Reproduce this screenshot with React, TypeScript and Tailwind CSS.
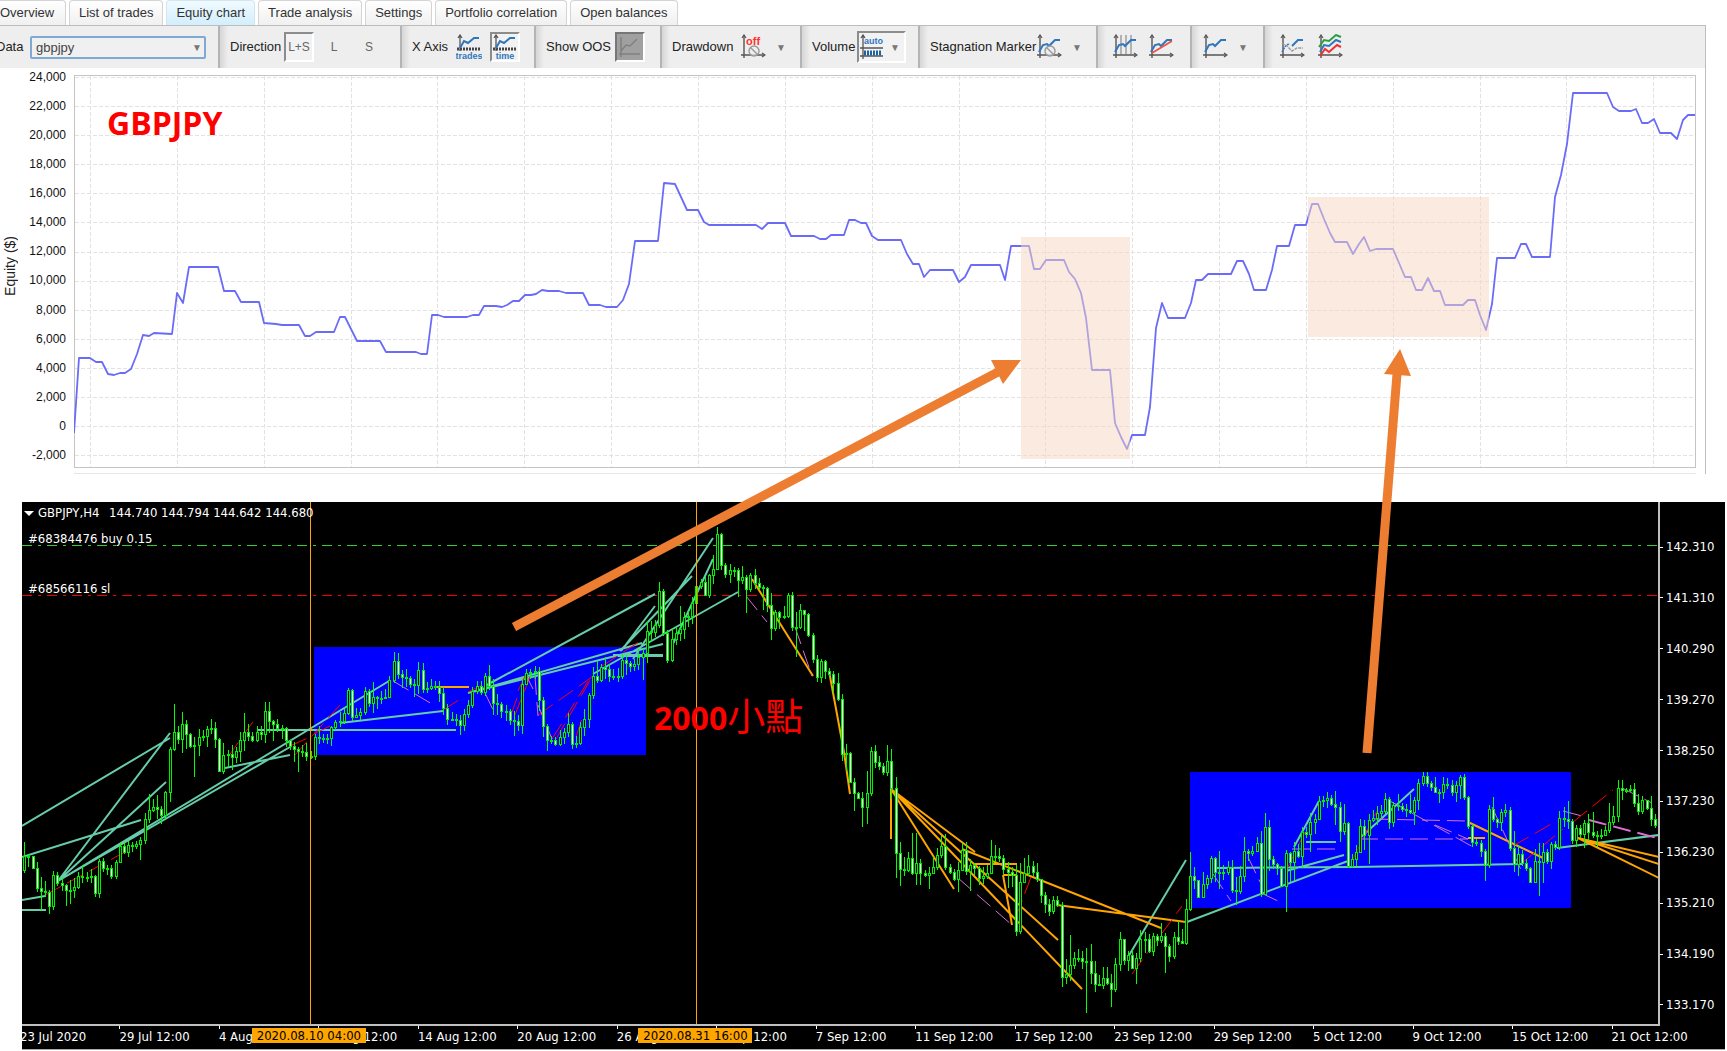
import React from "react";

const tabs = [
  "List of trades",
  "Equity chart",
  "Trade analysis",
  "Settings",
  "Portfolio correlation",
  "Open balances",
];

const equityLabels = [
  "24,000", "22,000", "20,000", "18,000", "16,000", "14,000", "12,000",
  "10,000", "8,000", "6,000", "4,000", "2,000", "0", "-2,000",
];

const priceLabels = [
  "142.310", "141.310", "140.290", "139.270", "138.250",
  "137.230", "136.230", "135.210", "134.190", "133.170",
];

const timeLabels = [
  "23 Jul 2020", "29 Jul 12:00", "4 Aug 12:00", "10 Aug 12:00", "14 Aug 12:00",
  "20 Aug 12:00", "26 Aug 12:00", "1 Sep 12:00", "7 Sep 12:00", "11 Sep 12:00",
  "17 Sep 12:00", "23 Sep 12:00", "29 Sep 12:00", "5 Oct 12:00", "9 Oct 12:00",
  "15 Oct 12:00", "21 Oct 12:00",
];

const equityPoints =
  "74,433 79,358 90,358 96,362 102,362 108,374 114,375 120,373 125,373 131,369 137,354 143,335 149,336 154,333 172,334 " +
  "177,293 183,303 189,267 218,267 224,291 235,291 241,302 259,302 264,323 276,324 282,325 299,325 305,336 310,336 " +
  "316,332 334,332 340,317 345,317 357,341 380,341 386,352 416,352 421,354 427,354 432,315 438,315 444,317 467,317 " +
  "473,315 479,315 484,306 496,306 502,307 507,305 513,301 519,301 525,295 531,295 536,294 542,290 548,291 559,291 " +
  "566,293 583,293 589,305 600,305 606,307 617,307 623,300 629,284 635,241 658,241 664,183 675,184 687,210 698,210 " +
  "704,222 709,225 756,225 762,229 768,223 785,223 791,236 814,236 820,239 826,239 831,235 844,235 849,220 855,220 " +
  "861,223 866,223 872,236 878,240 901,240 907,254 913,264 919,264 924,277 930,270 953,270 959,282 965,277 971,265 " +
  "1000,265 1005,280 1011,246 1029,246 1034,269 1040,269 1046,260 1064,260 1069,272 1075,279 1081,293 1086,318 " +
  "1092,370 1110,370 1115,423 1121,437 1127,449 1132,435 1145,435 1150,407 1156,328 1162,303 1168,318 1185,318 " +
  "1191,303 1196,280 1202,280 1208,274 1231,274 1237,261 1243,261 1249,274 1254,290 1266,290 1272,270 1277,246 " +
  "1289,246 1295,225 1306,225 1312,204 1318,204 1324,219 1330,233 1335,242 1347,242 1353,254 1359,244 1364,237 " +
  "1370,251 1376,249 1393,249 1399,263 1405,277 1411,277 1416,290 1422,290 1428,278 1434,291 1440,291 1445,305 " +
  "1463,305 1468,300 1475,300 1480,315 1486,330 1492,304 1497,258 1515,258 1521,244 1526,244 1532,257 1550,257 " +
  "1555,197 1561,175 1567,144 1573,93 1607,93 1613,107 1619,111 1631,111 1636,109 1642,123 1648,123 1654,119 " +
  "1660,133 1671,133 1677,139 1683,120 1688,115 1695,115";

// close, high, low of each H4 bar, as chart ordinates
const bars = `857,843,874 857,855,868 869,857,870 889,863,893 892,878,911 893,882,898 907,891,915 876,872,911 884,873,887 886,879,892
891,885,907 891,881,905 888,879,899 877,873,890 878,866,884 878,873,883 877,870,884 894,876,898 862,860,899 869,859,873
869,866,876 877,866,880 863,861,880 847,843,864 853,843,855 846,842,858 847,843,853 845,842,850 841,838,861 820,814,845
811,795,824 808,800,813 810,796,820 816,807,825 793,792,820 750,748,803 733,705,752 740,727,745 725,713,754 735,721,750
747,734,749 746,738,778 738,730,757 737,731,742 730,727,748 729,720,735 740,723,749 772,739,773 756,744,775 755,751,768
758,746,771 752,748,764 741,733,763 733,714,752 737,725,742 741,733,743 733,727,743 735,727,741 712,703,744 722,703,734
725,721,742 729,720,733 729,726,740 741,728,748 747,741,751 750,743,763 752,748,773 753,746,758 757,744,762 757,752,760
738,735,761 739,727,745 739,735,744 739,735,745 728,727,747 723,721,731 722,713,728 714,710,725 691,689,716 718,690,722
716,709,717 713,709,721 692,688,716 704,690,708 698,683,714 699,697,710 699,692,705 698,690,700 681,677,699 662,653,684
675,654,680 678,671,689 679,670,688 685,677,689 686,680,698 671,663,695 690,664,694 689,683,694 687,680,691 688,682,691
694,682,703 709,688,716 720,705,726 720,713,722 721,715,727 726,716,736 715,710,732 706,701,719 692,688,709 687,682,695
693,682,696 677,674,697 687,666,691 704,680,716 705,695,716 712,703,719 712,706,722 721,710,726 722,712,737 726,716,732
685,680,735 674,670,686 673,670,680 672,667,680 701,668,712 727,698,738 741,725,752 741,737,745 745,738,747 738,731,747
733,729,745 725,714,738 745,723,750 744,737,749 728,723,746 720,710,737 696,694,729 677,668,700 681,662,684 668,665,683
670,658,680 677,665,683 677,670,681 677,669,683 661,655,680 664,656,676 667,662,673 665,660,672 658,650,671 654,650,681
632,622,664 633,622,643 626,621,638 592,583,629 634,590,637 661,631,664 640,629,663 634,628,646 630,607,642 618,613,640
617,612,628 604,598,625 587,585,605 583,580,590 596,578,597 576,575,599 570,556,585 535,528,571 566,534,571 575,564,579
571,565,584 571,568,578 581,569,598 578,567,585 590,576,614 576,574,593 584,570,590 588,579,591 589,586,611 606,588,613
629,594,641 613,611,632 618,612,630 617,607,620 596,594,619 628,593,632 628,613,658 611,605,630 615,613,632 636,614,638
660,634,664 678,656,683 662,660,684 672,661,680 675,669,678 684,672,694 700,674,702 755,695,762 754,745,772 783,753,784
794,779,812 799,793,800 808,793,828 794,772,825 752,748,797 763,746,769 767,757,771 773,764,776 762,746,777 789,750,800
854,778,879 870,843,887 871,858,877 859,853,873 874,834,876 864,834,886 874,860,886 876,871,878 874,868,890 868,858,874
856,849,871 847,837,859 868,835,871 873,865,875 880,870,882 871,863,893 851,844,869 872,843,876 866,860,892 869,864,876
879,867,886 877,868,885 874,866,880 857,841,875 857,846,863 859,849,863 870,856,876 873,863,889 876,868,888 932,866,937
883,864,935 874,859,884 867,856,877 873,862,878 880,864,883 896,880,904 905,893,914 912,900,917 901,897,915 906,897,908
978,903,988 975,960,985 966,936,982 959,953,970 959,950,963 962,952,970 962,949,1014 974,945,985 985,962,993 986,976,987
979,968,990 984,968,986 990,975,1008 965,959,993 940,933,972 961,940,966 956,952,972 969,950,970 959,954,985 940,931,963
940,933,954 952,935,954 937,934,957 941,935,947 937,924,944 947,934,974 957,945,963 938,933,960 942,922,946 944,930,945
910,900,946 877,853,912 881,868,890 898,881,899 885,873,898 879,876,890 859,857,884 873,858,883 873,852,890 873,866,881
868,862,876 891,861,894 892,878,906 877,867,895 852,838,883 854,850,862 852,847,857 844,838,853 895,832,898 828,814,896
860,821,872 865,857,870 869,864,876 887,867,888 854,851,913 863,853,883 852,843,882 857,845,859 833,828,869 835,828,839
823,814,853 820,815,835 802,797,821 801,797,808 799,793,809 805,796,807 808,792,826 832,803,843 824,805,836 867,823,869
860,855,869 853,846,868 827,820,854 836,821,851 821,815,865 819,811,823 814,807,826 812,806,820 800,794,815 823,798,830
806,803,828 807,795,812 810,804,813 811,805,818 813,795,815 801,798,826 784,780,811 777,773,787 784,773,788 788,782,792
793,778,794 793,790,804 785,778,800 786,779,790 793,781,797 786,782,803 778,776,800 798,775,801 827,797,830 843,825,848
844,840,847 852,841,858 866,850,882 810,806,869 820,798,823 823,819,829 813,810,832 811,805,818 849,808,852 865,832,873
855,846,877 864,851,867 869,860,872 883,868,884 862,850,883 863,844,897 853,844,884 862,850,865 845,843,870 848,842,851
819,812,851 820,808,828 822,802,830 841,820,845 829,826,848 835,826,839 824,821,849 833,815,842 836,813,839 836,832,848
836,830,840 831,827,837 823,804,834 817,807,826 789,781,823 791,781,801 791,789,794 790,786,793 804,784,808 812,795,816
801,797,815 809,801,811 820,797,827 826,815,829`
  .split(/\s+/)
  .map((bar) => bar.split(",").map(Number));

const winners =
  "M22 827L170 739 M58 882L170 734 M58 882L166 783 M22 858L141 821 M58 882L389 682 M58 882L290 748 M22 901L45 897 " +
  "M22 911H46 M225 769L290 756 M257 731H456 M340 724L443 712 M485 687L655 595 M468 694L642 644 M468 694L663 645 " +
  "M613 656H663 M618 657H663 M621 652L655 607 M620 652L692 577 M633 660L713 539 M672 647L713 560 M593 675L738 593 " +
  "M1128 958L1186 861 M1187 923L1348 862 M1217 869L1355 868L1522 865 M1286 872L1344 856 M1294 848L1319 802 " +
  "M1306 843H1336 M1360 839L1414 790 M1557 849L1659 836";

const losers =
  "M436 688H469 M752 580L813 677 M829 672L844 753L850 795 M891 790V840 M891 790L954 890 M891 790L1082 990 " +
  "M891 790L1058 941 M891 790L975 853 M962 850L1161 929 M974 865H1017 M1003 876H1016 M1003 876L1012 926 " +
  "M1057 906L1186 923 M1468 823L1543 859 M1468 839H1485 M1578 839L1659 858 M1578 839L1659 865 M1578 839L1659 879";

const closedBuys =
  "M45 896L125 853 M228 758L257 717 M290 747L310 738 M295 756L340 706 M314 735L334 725 M443 711L462 699 M468 693L482 686 " +
  "M512 713L517 699 M515 716L530 678 M518 692L527 673 M538 716L592 678 M552 740L592 676 M556 740L592 678 M576 738L585 711 " +
  "M602 667L642 641 M1031 878L1017 915 M1132 975L1182 907 M1513 847L1553 824 M1522 864L1563 830 M1573 823L1613 791 " +
  "M1287 870L1305 833 M1352 862L1377 812";

const closedSells =
  "M393 682L432 705 M485 694L496 717 M528 680L533 690 M535 678L538 717 M538 706L552 740 M746 597L767 623 M795 628L812 677 " +
  "M958 879L1012 926 M1213 875L1231 902 M1248 858L1260 883 M1261 894L1278 902 M1292 850H1337 M1360 840H1468 " +
  "M1372 820L1467 822 M1390 802L1475 849 M1435 826L1468 840 M1492 808L1522 873 M1563 812L1582 817 M1622 789L1652 804";

const Candle = ({ index }: { index: number }) => {
  const [close, high, low] = bars[index];
  const open = index ? bars[index - 1][0] : 871;
  const x = Math.round(24.3 + index * 4.149);
  const top = Math.min(open, close);
  const height = Math.max(Math.abs(close - open), 1);
  return (
    <g>
      <rect x={x} y={high} width="1" height={low - high} fill="#00ff00" />
      <rect
        x={x - 0.5}
        y={top + 0.5}
        width="2"
        height={height}
        fill={close > open ? "#ffffff" : "#000000"}
        stroke="#00f000"
      />
    </g>
  );
};

const Axes = () => (
  <g stroke="#555" strokeWidth="1.4" fill="none">
    <path d="M4 1V24M1 21H24" />
    <path d="M2 4L4 1L6 4M22 19L25 21L22 23" strokeWidth="1.2" />
  </g>
);

const Icon = ({ children, label }: { children: React.ReactNode; label?: string }) => (
  <svg width="26" height="26" viewBox="0 0 26 26" fill="none" role="img" aria-label={label}>
    {children}
  </svg>
);

const BLUE_LINE = "M3 18L7 11L11 10L13 12L19 6L24 6";

const AxisIcon = ({ word }: { word: string }) => (
  <Icon>
    <path d="M4 1V17M2 4L4 1L6 4" stroke="#555" strokeWidth="1.3" />
    <path d="M1 15H25" stroke="#444" strokeWidth="3" strokeDasharray="2 1" />
    <path d="M4 14L8 7L12 9L18 4L23 4" stroke="#2f76bd" strokeWidth="2" />
    <text x="13" y="25" textAnchor="middle" fontSize="9" fontWeight="700" fill="#2f76bd">
      {word}
    </text>
  </Icon>
);

const Forbidden = () => (
  <g stroke="#999" strokeWidth="1.4">
    <circle cx="14" cy="17" r="5" fill="#eee" fillOpacity="0.7" />
    <path d="M10.500 13.500L17.500 20.500" />
  </g>
);

const Group = ({ className, children }: { className: string; children: React.ReactNode }) => (
  <div
    className={`flex h-full shrink-0 items-center border-l-2 border-[#b4b4b4] bg-[linear-gradient(to_right,#d6d6d6,#eeeeee_8px)] pl-2.5 ${className}`}
  >
    {children}
  </div>
);

const pressed = "border-2 border-t-[#8c8c8c] border-l-[#8c8c8c] border-r-white border-b-white bg-[#f2f2f2]";

const Arrow = () => <span className="text-[10px] text-[#777]">▼</span>;

const Toolbar = () => (
  <div className="flex h-[42px] items-center overflow-hidden bg-[#eeeeee] text-[13px] whitespace-nowrap text-[#222]">
    <div className="flex w-[218px] shrink-0 items-center">
      <label htmlFor="data" className="-ml-1 w-[34px]">Data</label>
      <div className="relative w-[176px]">
        <select
          id="data"
          className="block h-[23px] w-full appearance-none rounded-xs border-2 border-[#7fa9d2] bg-[#f0f0f0] pl-1 text-[13px] text-[#444]"
        >
          <option>gbpjpy</option>
        </select>
        <span className="pointer-events-none absolute top-1 right-1 text-[10px] text-[#777]">▼</span>
      </div>
    </div>
    <Group className="w-[182px]">
      <span className="w-[54px]">Direction</span>
      <button className={`h-[30px] w-[30px] text-xs text-[#666] ${pressed}`}>L+S</button>
      <button className="ml-0.5 w-[36px] text-xs text-[#666]">L</button>
      <button className="w-[34px] text-xs text-[#666]">S</button>
    </Group>
    <Group className="w-[134px]">
      <span className="w-[44px]">X Axis</span>
      <button aria-label="By trades"><AxisIcon word="trades" /></button>
      <button aria-label="By time" className={`ml-2 flex h-[30px] w-[30px] items-center justify-center ${pressed}`}>
        <AxisIcon word="time" />
      </button>
    </Group>
    <Group className="w-[126px]">
      <span className="w-[69px]">Show OOS</span>
      <button aria-label="Show OOS" className="h-[30px] w-[30px] border-2 border-t-[#777] border-r-white border-b-white border-l-[#777] bg-[#a0a0a0]">
        <Icon>
          <path d="M4 3V23M2 20H23M4 17L9 11L13 12L20 5" stroke="#808080" strokeWidth="1.500" />
        </Icon>
      </button>
    </Group>
    <Group className="w-[140px]">
      <span className="w-[68px]">Drawdown</span>
      <button aria-label="Drawdown" className="flex items-center gap-2.5">
        <Icon>
          <Axes />
          <Forbidden />
          <text x="6" y="11" fontSize="11" fontWeight="700" fill="#ff3030">off</text>
        </Icon>
        <Arrow />
      </button>
    </Group>
    <Group className="w-[118px]">
      <span className="w-[45px]">Volume</span>
      <button aria-label="Volume" className={`flex h-8 w-[49px] items-center justify-between pr-1 ${pressed}`}>
        <Icon>
          <path d="M4 1V25M1 14H24M1 22H24M2 4L4 1L6 4" stroke="#555" strokeWidth="1.300" />
          <path d="M5 19H23" stroke="#2060a0" strokeWidth="5" strokeDasharray="2 1" />
          <text x="5" y="10" fontSize="9" fontWeight="700" fill="#2f76bd">auto</text>
        </Icon>
        <Arrow />
      </button>
    </Group>
    <Group className="w-[178px]">
      <span className="w-[106px]">Stagnation Marker</span>
      <button aria-label="Stagnation marker" className="flex items-center gap-2.5">
        <Icon>
          <Axes />
          <path d={BLUE_LINE} stroke="#2f76bd" strokeWidth="2" />
          <Forbidden />
        </Icon>
        <Arrow />
      </button>
    </Group>
    <Group className="w-[94px] gap-2.5 pl-3.5">
      <button aria-label="Grid">
        <Icon>
          <Axes />
          <path d="M9 1V21M14 1V21M19 1V21" stroke="#777" />
          <path d={BLUE_LINE} stroke="#2f76bd" strokeWidth="2" />
        </Icon>
      </button>
      <button aria-label="Trend line">
        <Icon>
          <Axes />
          <path d={BLUE_LINE} stroke="#2f76bd" strokeWidth="2" />
          <path d="M4 19L24 7" stroke="#f05040" strokeWidth="1.800" />
        </Icon>
      </button>
    </Group>
    <Group className="w-[73px]">
      <button aria-label="Line style" className="flex items-center gap-2.5">
        <Icon>
          <Axes />
          <path d={BLUE_LINE} stroke="#2f76bd" strokeWidth="2" />
        </Icon>
        <Arrow />
      </button>
    </Group>
    <Group className="flex-1 gap-3 pl-3.5">
      <button aria-label="Compare">
        <Icon>
          <Axes />
          <path d="M3 18L7 11L11 10" stroke="#2f76bd" strokeWidth="1.500" strokeDasharray="2 1" />
          <path d="M3 9L8 12L13 17L18 14L24 14" stroke="#999" strokeWidth="1.400" strokeDasharray="3 1" />
          <path d="M13 12L19 6L24 6" stroke="#2f76bd" strokeWidth="2" />
        </Icon>
      </button>
      <button aria-label="All curves">
        <Icon>
          <Axes />
          <path d="M2 13L7 6L12 7L19 1L24 3" stroke="#2ca03c" strokeWidth="2" />
          <path d="M3 18L7 11L12 12L19 6L24 8" stroke="#2f76bd" strokeWidth="2" />
          <path d="M3 22L8 15L12 18L20 11L24 13" stroke="#f03030" strokeWidth="2" />
        </Icon>
      </button>
    </Group>
  </div>
);

const EquityChart = () => (
  <div className="flex">
    <div className="flex w-[74px] shrink-0 items-stretch pt-[3px] pb-[13px]">
      <div className="flex w-5 items-center justify-center">
        <span className="rotate-180 text-sm leading-5 whitespace-nowrap text-[#222] [writing-mode:vertical-rl]">Equity ($)</span>
      </div>
      <div className="flex flex-1 flex-col justify-between pr-2 text-right text-xs leading-3 text-[#111]">
        {equityLabels.map((label) => (
          <span key={label}>{label}</span>
        ))}
      </div>
    </div>
    <div className="min-w-0 flex-1 pt-[7px] pr-[9px]">
      <div className="border-b border-[#e6e6e6] pb-[5px]">
        <svg viewBox="74 75 1622 393" className="block w-full">
          <g stroke="#e2e2e2" strokeDasharray="4 2">
            {equityLabels.map((label, i) => (
              <path key={label} d={`M75 ${Math.round(76.8 + i * 29.13) + 0.5}H1695`} />
            ))}
            {Array.from({ length: 19 }, (_, i) => (
              <path key={i} d={`M${Math.round(90 + i * 86.85) + 0.5} 76V467`} />
            ))}
          </g>
          <rect x="74.500" y="75.500" width="1621" height="392" fill="none" stroke="#c4c4c4" />
          <polyline points={equityPoints} fill="none" stroke="#6a6cf8" strokeWidth="1.800" strokeLinejoin="round" />
        </svg>
      </div>
    </div>
  </div>
);

const PriceChart = () => (
  <section className="mt-7 mr-0.5 ml-[22px] border-b border-[#aaa] bg-black font-['DejaVu_Sans_Condensed','Noto_Sans',sans-serif] text-[13px] leading-4 text-white">
    <div className="flex">
      <div className="relative min-w-0 flex-1">
        <svg viewBox="22 503 1636 522" className="block w-full">
          <rect x="314" y="648" width="332" height="108" fill="#0000ff" />
          <rect x="1190" y="773" width="381" height="136" fill="#0000ff" />
          <path d="M22 546.500H1658" stroke="#32cd32" strokeDasharray="10 6 3 6" />
          <path d="M22 596.500H1658" stroke="#f00000" strokeDasharray="10 6 3 6" />
          <g fill="none">
            <path d={winners} stroke="#66cdaa" strokeWidth="2" />
            <path d={losers} stroke="#ffa500" strokeWidth="2" />
            <path d={closedBuys} stroke="#ff0000" strokeDasharray="18 7" />
            <path d={closedSells} stroke="#da70d6" strokeDasharray="18 7" />
            <path d="M1589 821L1657 839" stroke="#da70d6" strokeWidth="2" strokeDasharray="18 7" />
          </g>
          {bars.map((_, i) => (
            <Candle key={i} index={i} />
          ))}
          <path d="M310.500 503V1025M696.500 503V1025" stroke="#ffa500" />
        </svg>
        <div className="absolute top-[3px] left-0.5 whitespace-nowrap">
          <p className="flex items-center">
            <svg width="10" height="5" viewBox="0 0 10 5" fill="#fff"><path d="M0 0H10L5 5Z" /></svg>
            <span className="ml-1 w-[71px]">GBPJPY,H4</span>
            <span>144.740 144.794 144.642 144.680</span>
          </p>
          <p className="mt-2.5 ml-1">#68384476 buy 0.15</p>
          <p className="mt-[34px] ml-1">#68566116 sl</p>
        </div>
      </div>
      <div className="flex w-[67px] shrink-0 flex-col justify-between border-l-2 border-[#c0c0c0] pt-[37px] pb-[11px]">
        {priceLabels.map((label) => (
          <span key={label} className="flex items-center gap-[3px]">
            <i className="h-px w-[3px] bg-white" />
            {label}
          </span>
        ))}
      </div>
    </div>
    <div className="relative h-[25px] overflow-hidden">
      <div className="mr-[65px] h-0.5 bg-[#c0c0c0]" />
      <div className="mr-3.5 -ml-0.5 grid grid-cols-17 whitespace-nowrap">
        {timeLabels.map((label) => (
          <div key={label}>
            <i className="block h-[3px] w-px bg-white" />
            <span className="block leading-4">{label}</span>
          </div>
        ))}
      </div>
      <span className="absolute top-1 left-[13.5%] w-[114px] bg-[#ffa500] text-center leading-[15px] text-black">2020.08.10 04:00</span>
      <span className="absolute top-1 left-[36.2%] w-[114px] bg-[#ffa500] text-center leading-[15px] text-black">2020.08.31 16:00</span>
    </div>
  </section>
);

// highlights, arrows and captions drawn over both charts
const Annotations = () => (
  <svg viewBox="0 0 1727 1051" className="pointer-events-none absolute inset-0 w-full">
    <g fill="#f7d5bf" fillOpacity="0.5">
      <rect x="1021" y="237" width="109" height="222" />
      <rect x="1308" y="197" width="181" height="140" />
    </g>
    <g fill="#ed7d31" stroke="#ed7d31">
      <path d="M514 627L998 372" strokeWidth="9" />
      <path d="M1021 360L991 360L1003 384Z" stroke="none" />
      <path d="M1367 753L1397 374" strokeWidth="9" />
      <path d="M1400 349L1384 374L1411 376Z" stroke="none" />
    </g>
    <g fill="#ff0000" fontFamily="'Open Sans', 'Noto Sans CJK TC', sans-serif" fontSize="32" fontWeight="700">
      <text x="107" y="135">GBPJPY</text>
      <text x="654" y="730">
        2000<tspan fontSize="38" fontWeight="400">小點</tspan>
      </text>
    </g>
  </svg>
);

export default function App() {
  return (
    <main className="relative overflow-hidden bg-white font-['Liberation_Sans',Arial,sans-serif]">
      <nav className="flex h-[25px] items-end gap-[3px] text-[13px] whitespace-nowrap text-[#333]">
        <button className="h-[25px] w-[66px] rounded-tr-sm border border-b-0 border-l-0 border-[#d4d4d4] bg-linear-to-b from-white to-[#f0f0f0] text-left">
          Overview
        </button>
        {tabs.map((tab) => (
          <button
            key={tab}
            className={`h-[25px] rounded-t-sm border border-b-0 px-[9px] ${
              tab === "Equity chart"
                ? "border-[#d3e6ef] bg-linear-to-b from-[#f0faff] to-[#d2effc]"
                : "border-[#d4d4d4] bg-linear-to-b from-white to-[#f0f0f0]"
            }`}
          >
            {tab}
          </button>
        ))}
      </nav>
      <section className="mr-[21px] border-t border-r border-[#bdbdbd]">
        <Toolbar />
        <EquityChart />
      </section>
      <PriceChart />
      <Annotations />
    </main>
  );
}
